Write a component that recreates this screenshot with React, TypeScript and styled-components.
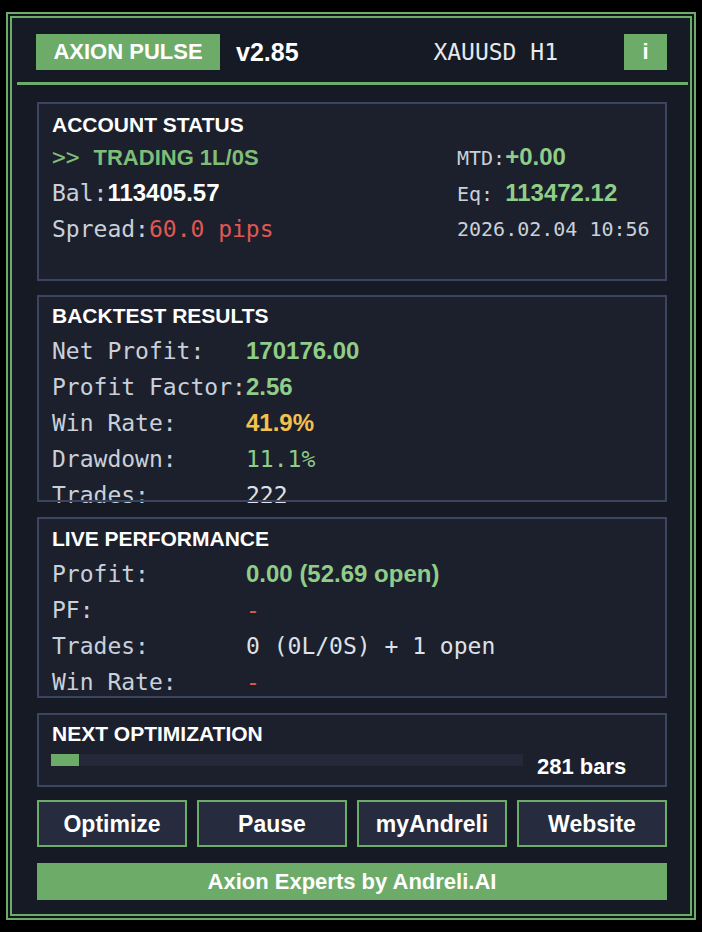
import React from 'react';
import styled, {createGlobalStyle} from 'styled-components';

const GREEN = '#6dab69';
const SANS = '"Liberation Sans", Arial, sans-serif';
const MONO = '"DejaVu Sans Mono", "Liberation Mono", monospace';

const GlobalStyle = createGlobalStyle`
  html, body {
    margin: 0;
    padding: 0;
    background: #000;
  }
  body {
    font-family: ${SANS};
    color: #f2f2f2;
  }
`;

const Frame = styled.div`
  margin: 12px 0 0 6px;
  width: 690px;
  height: 908px;
  box-sizing: border-box;
  border: 2px solid ${GREEN};
  padding: 2px;
  background: #10141b;
`;

const Inner = styled.div`
  height: 100%;
  box-sizing: border-box;
  border: 2px solid ${GREEN};
  background: #161a24;
  display: flex;
  flex-direction: column;
`;

const Header = styled.div`
  display: flex;
  align-items: center;
  margin: 0 2px 0 5px;
  padding: 16px 21px 12px 19px;
  border-bottom: 3px solid ${GREEN};
`;

const Badge = styled.div`
  width: 184px;
  height: 36px;
  background: ${GREEN};
  color: #fff;
  font: 700 22px/36px ${SANS};
  text-align: center;
`;

const Version = styled.div`
  margin-left: 16px;
  font: 700 25px/36px ${SANS};
  color: #fff;
`;

const Symbol = styled.div`
  margin-left: auto;
  margin-right: 66px;
  font: 400 23px/36px ${MONO};
  color: #e6e9ee;
`;

const InfoButton = styled.div`
  width: 43px;
  height: 36px;
  background: ${GREEN};
  color: #fff;
  font: 700 22px/36px ${SANS};
  text-align: center;
`;

const Body = styled.div`
  display: flex;
  flex-direction: column;
  padding: 17px 23px 0 25px;
`;

const Panel = styled.div<{$h: number; $top: number; $mt?: number}>`
  position: relative;
  box-sizing: border-box;
  height: ${p => p.$h}px;
  margin-top: ${p => p.$mt ?? 0}px;
  padding: ${p => p.$top}px 14px 0 15px;
  background: #1c202d;

  &::after {
    content: '';
    position: absolute;
    inset: 0;
    border: 2px solid #3a4560;
    pointer-events: none;
  }
`;

const Title = styled.div<{$gap: number}>`
  font: 700 21px/28px ${SANS};
  color: #fff;
  margin-bottom: ${p => p.$gap}px;
`;

const Row = styled.div<{$cols: number}>`
  display: grid;
  grid-template-columns: ${p => p.$cols}px 1fr;
  height: 36px;
  line-height: 36px;
  white-space: nowrap;
`;

const Cell = styled.div`
  line-height: 36px;
`;

const Label = styled.span<{$small?: boolean}>`
  font: 400 ${p => (p.$small ? 20 : 23)}px/36px ${MONO};
  color: #c9d0da;
`;

const Mono = styled.span<{$color: string}>`
  font: 400 23px/36px ${MONO};
  color: ${p => p.$color};
`;

const Value = styled.span<{$color: string}>`
  font: 700 24px/36px ${SANS};
  color: ${p => p.$color};
`;

const Status = styled.span`
  font: 700 22px/36px ${SANS};
  color: #7fbd79;
`;

const BarRow = styled.div`
  display: flex;
  align-items: flex-start;
  margin-left: -1px;
`;

const Track = styled.div`
  width: 472px;
  height: 12px;
  background: #232939;
`;

const Fill = styled.div`
  height: 100%;
  background: ${GREEN};
`;

const BarText = styled.div`
  margin-left: 14px;
  font: 700 22px/26px ${SANS};
  color: #fff;
`;

const Buttons = styled.div`
  display: grid;
  grid-template-columns: repeat(4, 1fr);
  gap: 10px;
  margin-top: 13px;
`;

const Button = styled.div`
  height: 47px;
  box-sizing: border-box;
  border: 2px solid ${GREEN};
  background: #262c3e;
  color: #fff;
  font: 700 23px/45px ${SANS};
  text-align: center;
`;

const Footer = styled.div`
  margin-top: 16px;
  height: 37px;
  background: ${GREEN};
  color: #fff;
  font: 700 22px/37px ${SANS};
  text-align: center;
`;

const GREEN_TXT = '#8fcd88';
const LIGHT = '#dde2e8';
const RED = '#e0584f';
const YELLOW = '#f2c14e';

export default function App() {
  const progress = 6;
  return (
    <>
      <GlobalStyle />
      <Frame>
        <Inner>
          <Header>
            <Badge>AXION PULSE</Badge>
            <Version>v2.85</Version>
            <Symbol>XAUUSD H1</Symbol>
            <InfoButton>i</InfoButton>
          </Header>
          <Body>
            <Panel $h={179} $top={9}>
              <Title $gap={0}>ACCOUNT STATUS</Title>
              <Row $cols={405}>
                <Cell>
                  <Mono $color="#7fbd79">&gt;&gt; </Mono>
                  <Status>TRADING 1L/0S</Status>
                </Cell>
                <Cell>
                  <Label $small>MTD:</Label>
                  <Value $color={GREEN_TXT}>+0.00</Value>
                </Cell>
              </Row>
              <Row $cols={405}>
                <Cell>
                  <Label>Bal:</Label>
                  <Value $color="#fff">113405.57</Value>
                </Cell>
                <Cell>
                  <Label $small>Eq: </Label>
                  <Value $color={GREEN_TXT}>113472.12</Value>
                </Cell>
              </Row>
              <Row $cols={405}>
                <Cell>
                  <Label>Spread:</Label>
                  <Mono $color={RED}>60.0 pips</Mono>
                </Cell>
                <Cell>
                  <Label $small>2026.02.04 10:56</Label>
                </Cell>
              </Row>
            </Panel>

            <Panel $h={207} $top={7} $mt={14}>
              <Title $gap={3}>BACKTEST RESULTS</Title>
              <Row $cols={194}>
                <Label>Net Profit:</Label>
                <Cell><Value $color={GREEN_TXT}>170176.00</Value></Cell>
              </Row>
              <Row $cols={194}>
                <Label>Profit Factor:</Label>
                <Cell><Value $color={GREEN_TXT}>2.56</Value></Cell>
              </Row>
              <Row $cols={194}>
                <Label>Win Rate:</Label>
                <Cell><Value $color={YELLOW}>41.9%</Value></Cell>
              </Row>
              <Row $cols={194}>
                <Label>Drawdown:</Label>
                <Cell><Mono $color={GREEN_TXT}>11.1%</Mono></Cell>
              </Row>
              <Row $cols={194}>
                <Label>Trades:</Label>
                <Cell><Mono $color={LIGHT}>222</Mono></Cell>
              </Row>
            </Panel>

            <Panel $h={181} $top={8} $mt={15}>
              <Title $gap={3}>LIVE PERFORMANCE</Title>
              <Row $cols={194}>
                <Label>Profit:</Label>
                <Cell><Value $color={GREEN_TXT}>0.00 (52.69 open)</Value></Cell>
              </Row>
              <Row $cols={194}>
                <Label>PF:</Label>
                <Cell><Mono $color={RED}>-</Mono></Cell>
              </Row>
              <Row $cols={194}>
                <Label>Trades:</Label>
                <Cell><Mono $color={LIGHT}>0 (0L/0S) + 1 open</Mono></Cell>
              </Row>
              <Row $cols={194}>
                <Label>Win Rate:</Label>
                <Cell><Mono $color={RED}>-</Mono></Cell>
              </Row>
            </Panel>

            <Panel $h={74} $top={7} $mt={15}>
              <Title $gap={6}>NEXT OPTIMIZATION</Title>
              <BarRow>
                <Track>
                  <Fill style={{width: `${progress}%`}} />
                </Track>
                <BarText>281 bars</BarText>
              </BarRow>
            </Panel>

            <Buttons>
              <Button>Optimize</Button>
              <Button>Pause</Button>
              <Button>myAndreli</Button>
              <Button>Website</Button>
            </Buttons>

            <Footer>Axion Experts by Andreli.AI</Footer>
          </Body>
        </Inner>
      </Frame>
    </>
  );
}
